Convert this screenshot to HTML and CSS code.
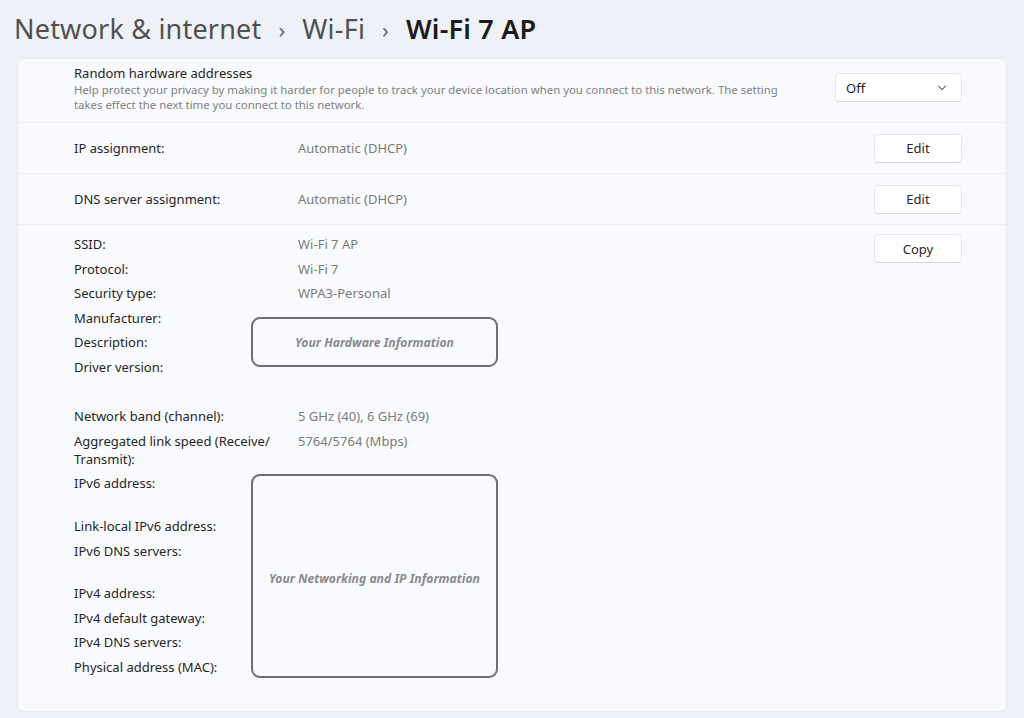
FILE: index.html
```html
<!DOCTYPE html>
<html lang="en">
<head>
  <meta charset="UTF-8" />
  <title>Wi-Fi 7 AP</title>
  <link rel="stylesheet" href="styles.css">
</head>
<body>
  <h1 class="breadcrumb">
    <span class="crumb">Network &amp; internet</span>
    <span class="sep">&#8250;</span>
    <span class="crumb">Wi-Fi</span>
    <span class="sep">&#8250;</span>
    <span class="crumb current">Wi-Fi 7 AP</span>
  </h1>

  <div class="card">
    <div class="row setting">
      <div class="setting-text">
        <div class="setting-title">Random hardware addresses</div>
        <div class="setting-desc">Help protect your privacy by making it harder for people to track your device location when you connect to this network. The setting takes effect the next time you connect to this network.</div>
      </div>
      <div class="dropdown">
        <span>Off</span>
        <svg width="10" height="6" viewBox="0 0 10 6"><path d="M1.5 1.2 L5 4.6 L8.5 1.2" fill="none" stroke="#666" stroke-width="1.1" stroke-linecap="round" stroke-linejoin="round"/></svg>
      </div>
    </div>

    <div class="row line">
      <div class="label">IP assignment:</div>
      <div class="value">Automatic (DHCP)</div>
      <button class="btn">Edit</button>
    </div>

    <div class="row line">
      <div class="label">DNS server assignment:</div>
      <div class="value">Automatic (DHCP)</div>
      <button class="btn">Edit</button>
    </div>

    <div class="details">
      <div class="props">
        <div class="label">SSID:</div><div class="value">Wi-Fi 7 AP</div>
        <div class="label">Protocol:</div><div class="value">Wi-Fi 7</div>
        <div class="label">Security type:</div><div class="value">WPA3-Personal</div>
        <div class="label">Manufacturer:</div><div class="value"></div>
        <div class="label">Description:</div><div class="value"></div>
        <div class="label">Driver version:</div><div class="value"></div>

        <div class="spacer"></div>

        <div class="label">Network band (channel):</div><div class="value">5 GHz (40), 6 GHz (69)</div>
        <div class="label">Aggregated link speed (Receive/ Transmit):</div><div class="value">5764/5764 (Mbps)</div>
        <div class="label tall">IPv6 address:</div><div class="value"></div>
        <div class="label">Link-local IPv6 address:</div><div class="value"></div>
        <div class="label tall">IPv6 DNS servers:</div><div class="value"></div>
        <div class="label">IPv4 address:</div><div class="value"></div>
        <div class="label">IPv4 default gateway:</div><div class="value"></div>
        <div class="label">IPv4 DNS servers:</div><div class="value"></div>
        <div class="label">Physical address (MAC):</div><div class="value"></div>
      </div>
      <button class="btn">Copy</button>

      <div class="redact hw">Your Hardware Information</div>
      <div class="redact net">Your Networking and IP Information</div>
    </div>
  </div>
</body>
</html>
```

FILE: styles.css
```css
body {
  margin: 0;
  background: #eef1f7;
  font-family: 'Noto Sans', 'Open Sans', sans-serif;
  color: #1f1f1f;
  height: 718px;
  overflow: hidden;
}
.breadcrumb {
  margin: 0;
  padding: 9px 0 0 14px;
  height: 49px;
  box-sizing: border-box;
  font-size: 27px;
  font-weight: 400;
  color: #505050;
  display: flex;
  align-items: center;
  gap: 17px;
  line-height: 36px;
}
.breadcrumb .crumb {
  letter-spacing: 0.2px;
}
.breadcrumb .sep {
  font-size: 22px;
  color: #666;
}
.breadcrumb .current {
  color: #1b1b1b;
  font-weight: 600;
}
.card {
  margin: 9px 17px 0 17px;
  background: #f9fafd;
  border: 1px solid #e8ebf1;
  border-radius: 6px;
  height: 654px;
  box-sizing: border-box;
}
.row {
  display: flex;
  align-items: center;
  padding: 0 44px 0 56px;
}
.setting {
  height: 63px;
  align-items: flex-start;
  padding-top: 5px;
  box-sizing: border-box;
}
.setting-text {
  flex: 1;
  padding-right: 36px;
}
.setting-title {
  font-size: 13px;
  line-height: 18px;
  color: #1f1f1f;
}
.setting-desc {
  font-size: 11.4px;
  line-height: 15px;
  color: #808080;
  width: 725px;
}
.dropdown {
  width: 128px;
  height: 29px;
  box-sizing: border-box;
  background: #fff;
  border: 1px solid #e4e6ea;
  border-bottom-color: #d4d6da;
  border-radius: 4px;
  display: flex;
  align-items: center;
  justify-content: space-between;
  padding: 0 14px 0 10px;
  font-size: 13px;
  margin-top: 9px;
}
.line {
  height: 51px;
  border-top: 1px solid #eceef2;
  box-sizing: border-box;
}
.label {
  font-size: 13px;
  line-height: 18px;
  color: #262626;
  width: 224px;
}
.value {
  font-size: 13px;
  line-height: 18px;
  color: #7a7a7a;
  flex: 1;
}
.btn {
  width: 88px;
  height: 29px;
  background: #fff;
  border: 1px solid #e4e6ea;
  border-bottom-color: #d2d4d8;
  border-radius: 4px;
  font-family: inherit;
  font-size: 13px;
  color: #262626;
  padding: 0;
}
.details {
  position: relative;
  display: flex;
  align-items: flex-start;
  padding: 10px 44px 0 56px;
  border-top: 1px solid #eceef2;
}
.props {
  flex: 1;
  display: grid;
  grid-template-columns: 224px 1fr;
  row-gap: 6.6px;
}
.props .label {
  width: auto;
  padding-right: 10px;
}
.props .value {
  min-height: 18px;
}
.props .tall {
  min-height: 36px;
}
.spacer {
  grid-column: 1 / 3;
  height: 18px;
}
.details .btn {
  margin-top: -1px;
}
.redact {
  position: absolute;
  left: 233px;
  width: 247px;
  box-sizing: border-box;
  border: 2px solid #6f6f73;
  border-radius: 9px;
  display: flex;
  align-items: center;
  justify-content: center;
  font-size: 12.2px;
  font-style: italic;
  font-weight: 700;
  color: #8a8a8e;
  background: #f9fafd;
}
.redact.hw {
  top: 92px;
  height: 50px;
}
.redact.net {
  top: 249px;
  height: 204px;
  padding-top: 4px;
}
```
